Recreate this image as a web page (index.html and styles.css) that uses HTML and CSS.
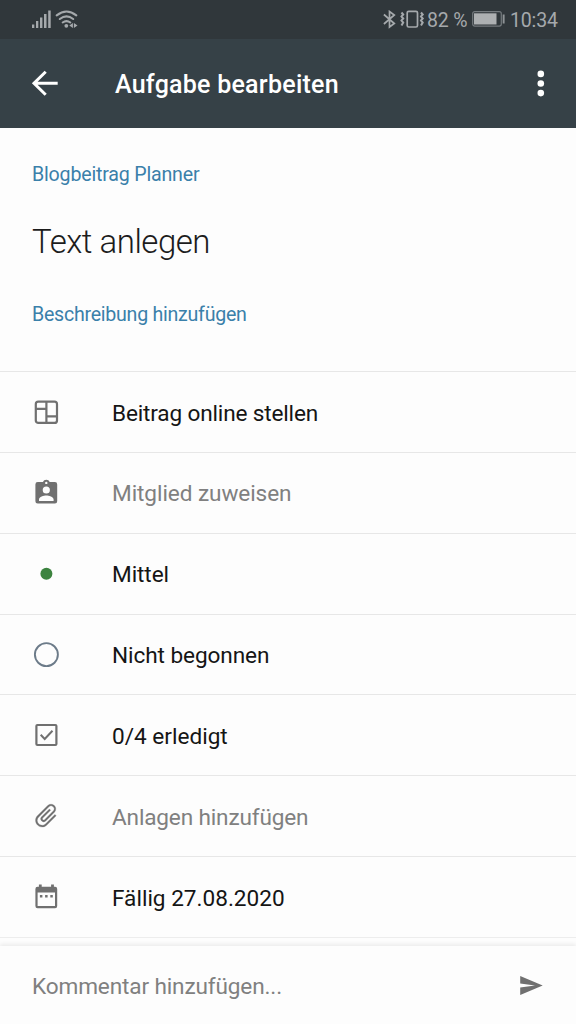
FILE: index.html
```html
<!DOCTYPE html>
<html lang="de">
<head>
<meta charset="utf-8">
<title>Aufgabe bearbeiten</title>
<link rel="stylesheet" href="styles.css">
</head>
<body>
<div class="screen">
  <div class="status">
    <svg class="signal" width="48" height="20" viewBox="0 0 48 20">
      <g fill="#a5a9ac"><rect x="0" y="14.500" width="2.300" height="3.500"/><rect x="4" y="11" width="2.300" height="7"/><rect x="8" y="7.500" width="2.400" height="10.500"/><rect x="12" y="4" width="2.500" height="14"/><rect x="16.200" y="0.500" width="2.500" height="17.500"/></g>
      <g fill="none" stroke="#a5a9ac" stroke-width="2.100" stroke-linecap="round"><path d="M24.700 5.300Q34.500-2.300 44.300 5.300"/><path d="M27.800 9Q34.500 3.800 41.200 9"/><path d="M30.700 12.500Q34.500 9.700 38.300 12.500"/></g>
      <circle cx="34.300" cy="15.800" r="1.900" fill="#a5a9ac"/>
      <path d="M37.300 15.500l3.600-2.500v5zM45.500 15.500l-3.600-2.500v5z" fill="#a5a9ac"/>
    </svg>
    <div class="status-right">
      <svg width="44" height="20" viewBox="0 0 44 20" fill="none" stroke="#a5a9ac" stroke-width="1.700">
        <path d="M.9 4.500L11.300 13.500L6.500 17V1.500L11.300 5L.9 14"/>
        <rect x="24.200" y="1.300" width="10.300" height="15.700" rx="1.500"/>
        <path d="M18.500 2.500l1.700 2-1.700 2 1.700 2-1.700 2 1.700 2-1.700 3M38 2.500l1.700 2-1.700 2 1.700 2-1.700 2 1.700 2-1.700 3" stroke-width="2"/>
      </svg>
      <span class="percent">82 %</span>
      <svg class="battery" width="33" height="16" viewBox="0 0 33 16">
        <rect x=".7" y=".7" width="28.600" height="14.400" rx="2" fill="none" stroke="#747a7e" stroke-width="1.200"/>
        <rect x="2" y="2.300" width="22.500" height="11.200" fill="#adb0b2"/>
        <rect x="30.700" y="3.500" width="1.900" height="9" fill="#8e9396"/>
      </svg>
      <span class="clock">10:34</span>
    </div>
  </div>
  <header class="appbar">
    <svg width="28" height="28" viewBox="0 0 28 28" fill="none" stroke="#fff" stroke-width="3"><path d="M26.700 13.300H3M14.700 1.800L3 13.300l11.700 11.500"/></svg>
    <h1 class="appbar-title">Aufgabe bearbeiten</h1>
    <svg class="more" width="8" height="28" viewBox="0 0 8 28" fill="#fff"><circle cx="3.800" cy="3.900" r="3.300"/><circle cx="3.800" cy="13.500" r="3.300"/><circle cx="3.800" cy="23.100" r="3.300"/></svg>
  </header>
  <main class="content">
    <section class="intro">
      <a class="link plan">Blogbeitrag Planner</a>
      <h2 class="task">Text anlegen</h2>
      <a class="link describe">Beschreibung hinzufügen</a>
    </section>
    <div class="rows">
      <div class="row">
        <svg class="icon" viewBox="-.4 0 28 28" fill="none" stroke="#707070" stroke-width="2.200"><rect x="3.400" y="3.700" width="21.200" height="21.200" rx="2.500"/><path d="M14 3.500v21.500M3.200 10.800h11M14 18.300h10.500"/></svg>
        <span class="label l-bucket">Beitrag online stellen</span>
      </div>
      <div class="row">
        <svg class="icon" viewBox="-.4 .4 28 28"><path fill="#707070" fill-rule="evenodd" d="M5.300 3.500h5.200a3.600 3.600 0 0 1 6.800 0h5.200q2.300 0 2.300 2.300v16.800q0 2.300-2.300 2.300H5.300Q3 24.900 3 22.600V5.800q0-2.300 2.300-2.300zM13.900 3.100a1.200 1.200 0 1 0 0 2.400 1.200 1.200 0 0 0 0-2.400zM13.900 7.800a3.600 3.600 0 1 0 0 7.200 3.600 3.600 0 0 0 0-7.200zM6.600 22.500h14.600v-1.700c0-2.500-4.800-3.800-7.300-3.800s-7.300 1.300-7.300 3.800z"/></svg>
        <span class="label muted l-member">Mitglied zuweisen</span>
      </div>
      <div class="row">
        <svg class="icon" viewBox="-.4 0 28 28"><circle cx="14" cy="13.700" r="6" fill="#3c833f"/></svg>
        <span class="label l-priority">Mittel</span>
      </div>
      <div class="row">
        <svg class="icon" viewBox="-.4 0 28 28"><circle cx="14" cy="13.600" r="11.500" fill="none" stroke="#6c7b89" stroke-width="1.900"/></svg>
        <span class="label l-progress">Nicht begonnen</span>
      </div>
      <div class="row">
        <svg class="icon" viewBox="-.4 0 28 28" fill="none" stroke="#707070"><rect x="4" y="4" width="20" height="20" rx="1" stroke-width="2.200"/><path d="M8.300 13.800l4 4.200 7.800-8.200" stroke-width="2"/></svg>
        <span class="label l-check">0/4 erledigt</span>
      </div>
      <div class="row">
        <svg class="icon" viewBox="-.4 -.3 28 28"><g transform="translate(14 13.500) rotate(45) scale(1.200 1.170) translate(-12.300 -12)"><path d="M16.500 6v11.500c0 2.210-1.790 4-4 4s-4-1.790-4-4V5a2.500 2.500 0 0 1 5 0v10.500c0 .55-.45 1-1 1s-1-.45-1-1V6H10v9.500a2.500 2.500 0 0 0 5 0V5c0-2.210-1.790-4-4-4S7 2.790 7 5v12.500c0 3.040 2.460 5.500 5.500 5.500s5.500-2.460 5.500-5.500V6h-1.500z" fill="#707070" stroke="#707070" stroke-width=".2"/></g></svg>
        <span class="label muted l-attach">Anlagen hinzufügen</span>
      </div>
      <div class="row">
        <svg class="icon" viewBox="-.4 .2 28 28" fill="#707070"><path fill-rule="evenodd" d="M5.200 4H6.500V1.800H9.300V4H18.700V1.800h2.800V4h1.200q2.100 0 2.100 2.100v17.200q0 2.200-2.100 2.200H5.200Q3 25.500 3 23.300V6.100Q3 4 5.200 4zM5.200 9.800v13.400h17.400V9.800z"/><path d="M7.500 12.200H10v2.500H7.500zM12.700 12.200h2.500v2.500h-2.500zM17.900 12.200h2.500v2.500h-2.500z"/></svg>
        <span class="label l-due">Fällig 27.08.2020</span>
      </div>
    </div>
  </main>
  <footer class="comment">
    <span class="label muted l-comment">Kommentar hinzufügen...</span>
    <svg width="24" height="20" viewBox="0 0 24 20"><path d="M1.200 1L23.700 10.500 1.200 20v-7.400L16 10.500 1.200 8.400z" fill="#707070"/></svg>
  </footer>
</div>
</body>
</html>
```
FILE: styles.css
```css
* { box-sizing: border-box; }
body { margin: 0; font-family: Roboto, "Liberation Sans", sans-serif; background: #fdfdfd; }
h1, h2 { margin: 0; }
svg { display: block; flex: none; }
.screen { width: 576px; height: 1024px; display: flex; flex-direction: column; overflow: hidden; }
.status { height: 39px; flex: none; background: #30373b; display: flex; justify-content: space-between; align-items: flex-start; padding: 10px 18px 0 32px; color: #a5a9ac; }
.status-right { display: flex; font-size: 19.500px; letter-spacing: -0.150px; line-height: 21px; white-space: nowrap; }
.percent { width: 45px; }
.battery { margin-top: 1px; }
.clock { margin-left: 5px; width: 48px; }
.appbar { height: 89px; flex: none; background: #364147; display: flex; align-items: center; padding: 0 31px; color: #fff; }
.appbar-title { margin-left: 56px; padding-top: 2px; font-size: 25px; line-height: 30px; font-weight: 500; letter-spacing: 0.250px; white-space: nowrap; }
.more { margin-left: auto; }
.content { flex: 1; min-height: 0; }
.intro { height: 243px; padding: 35px 32px 0; display: flex; flex-direction: column; align-items: flex-start; white-space: nowrap; }
.link { color: #3a80aa; font-size: 19.600px; line-height: 24px; letter-spacing: -0.190px; }
.describe { letter-spacing: -0.260px; }
.task { font-size: 33px; line-height: 40px; font-weight: 300; color: #1c1c1c; letter-spacing: -0.480px; margin: 35px 0 41px; }
.row { height: 80.860px; border-top: 1px solid #e7e7e7; display: flex; align-items: center; padding-left: 32.400px; }
.rows { border-bottom: 1px solid #ededed; }
.icon { width: 28px; height: 28px; }
.label { font-size: 22.600px; line-height: 28px; padding-top: 3.200px; letter-spacing: -0.080px; color: #151515; white-space: nowrap; }
.row .label { margin-left: 51.600px; }
.label.muted { color: #808080; }
.l-bucket, .l-attach { letter-spacing: -0.160px; }
.l-due, .l-check { letter-spacing: 0; }
.l-comment { letter-spacing: -0.140px; }
.comment { height: 78px; flex: none; display: flex; align-items: center; justify-content: space-between; padding: 0 33px 0 32px; background: #fdfdfd; box-shadow: 0 -2px 4px #00000012; position: relative; }
```
